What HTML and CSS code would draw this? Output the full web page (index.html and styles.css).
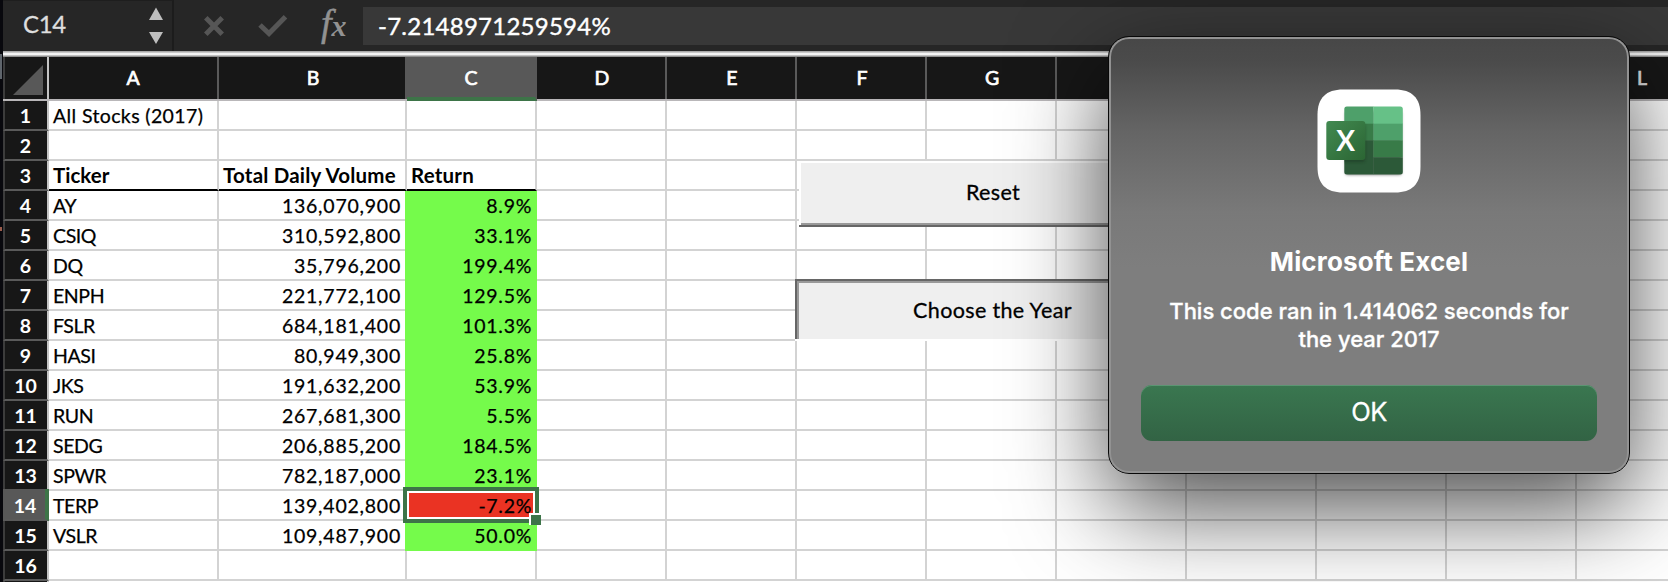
FILE: index.html
```html
<!DOCTYPE html>
<html lang="en">
<head>
<meta charset="utf-8">
<title>All Stocks</title>
<link rel="stylesheet" href="styles.css">
</head>
<body>
<div class="screen">
  <div class="edge"><i class="edge-grey"></i><i class="edge-red"></i></div>
  <main class="app">
    <header class="formula-bar">
      <div class="name-box">
        <span class="cell-name">C14</span>
        <svg class="stepper" width="16" height="38" viewBox="0 0 16 38"><path d="M8 0.500L15 13H1zM8 37L15 25H1z" fill="#bebebe"/></svg>
      </div>
      <div class="tools">
        <svg class="tool-x" width="20" height="20" viewBox="0 0 20 20"><path d="M1.800 1.800L18.200 18.200M18.200 1.800L1.800 18.200" stroke="#565656" stroke-width="5" fill="none"/></svg>
        <svg class="tool-check" width="30" height="22" viewBox="0 0 30 22"><path d="M2 10L11 18.500L27.500 1.800" stroke="#565656" stroke-width="5" fill="none"/></svg>
        <span class="fx"><span class="fx-f">f</span><span class="fx-x">x</span></span>
      </div>
      <div class="formula">-7.2148971259594%</div>
    </header>
    <div class="divider"></div>
    <section class="sheet">
      <div class="row heads">
        <div class="corner"><svg width="30" height="30" viewBox="0 0 30 30"><path d="M30 0V30H0z" fill="#585858"/></svg></div>
        <div class="col a">A</div><div class="col b">B</div><div class="col c on">C</div><div class="col">D</div><div class="col">E</div><div class="col">F</div><div class="col">G</div><div class="col">H</div><div class="col">I</div><div class="col">J</div><div class="col">K</div><div class="col dim">L</div>
      </div>
      <div class="row"><div class="num">1</div><div class="cell a title">All Stocks (2017)</div><div class="cell b"></div><div class="cell c"></div><div class="rest"></div></div>
      <div class="row"><div class="num">2</div><div class="cell a"></div><div class="cell b"></div><div class="cell c"></div><div class="rest"></div></div>
      <div class="row labels"><div class="num">3</div><div class="cell a">Ticker</div><div class="cell b">Total Daily Volume</div><div class="cell c">Return</div><div class="rest"></div></div>
      <div class="row"><div class="num">4</div><div class="cell a">AY</div><div class="cell b">136,070,900</div><div class="cell c up">8.9%</div><div class="rest"></div></div>
      <div class="row"><div class="num">5</div><div class="cell a">CSIQ</div><div class="cell b">310,592,800</div><div class="cell c up">33.1%</div><div class="rest"></div></div>
      <div class="row"><div class="num">6</div><div class="cell a">DQ</div><div class="cell b">35,796,200</div><div class="cell c up">199.4%</div><div class="rest"></div></div>
      <div class="row"><div class="num">7</div><div class="cell a">ENPH</div><div class="cell b">221,772,100</div><div class="cell c up">129.5%</div><div class="rest"></div></div>
      <div class="row"><div class="num">8</div><div class="cell a">FSLR</div><div class="cell b">684,181,400</div><div class="cell c up">101.3%</div><div class="rest"></div></div>
      <div class="row"><div class="num">9</div><div class="cell a">HASI</div><div class="cell b">80,949,300</div><div class="cell c up">25.8%</div><div class="rest"></div></div>
      <div class="row"><div class="num">10</div><div class="cell a">JKS</div><div class="cell b">191,632,200</div><div class="cell c up">53.9%</div><div class="rest"></div></div>
      <div class="row"><div class="num">11</div><div class="cell a">RUN</div><div class="cell b">267,681,300</div><div class="cell c up">5.5%</div><div class="rest"></div></div>
      <div class="row"><div class="num">12</div><div class="cell a">SEDG</div><div class="cell b">206,885,200</div><div class="cell c up">184.5%</div><div class="rest"></div></div>
      <div class="row"><div class="num">13</div><div class="cell a">SPWR</div><div class="cell b">782,187,000</div><div class="cell c up">23.1%</div><div class="rest"></div></div>
      <div class="row"><div class="num on">14</div><div class="cell a">TERP</div><div class="cell b">139,402,800</div><div class="cell c down"><span class="value">-7.2%</span><span class="selection"></span><span class="handle"></span></div><div class="rest"></div></div>
      <div class="row"><div class="num">15</div><div class="cell a">VSLR</div><div class="cell b">109,487,900</div><div class="cell c up">50.0%</div><div class="rest"></div></div>
      <div class="row"><div class="num">16</div><div class="cell a"></div><div class="cell b"></div><div class="cell c"></div><div class="rest"></div></div>
      <div class="row"><div class="num"></div></div>
    </section>
  </main>
  <button class="sheet-button reset">Reset</button>
  <button class="sheet-button choose">Choose the Year</button>
  <div class="dialog">
    <svg class="app-icon" width="104" height="104" viewBox="0 0 104 104">
      <defs>
        <linearGradient id="tile" x1="0" y1="0" x2="1" y2="1"><stop offset="0" stop-color="#428a51"/><stop offset="1" stop-color="#2b6533"/></linearGradient>
        <clipPath id="book"><rect x="27.300" y="17.500" width="58.500" height="68" rx="2.500"/></clipPath>
        <filter id="soft" x="-30%" y="-30%" width="160%" height="160%"><feGaussianBlur stdDeviation="1.600"/></filter>
      </defs>
      <path d="M26 .5H78C95 .5 103.500 9 103.500 26V78C103.500 95 95 103.500 78 103.500H26C9 103.500 .5 95 .5 78V26C.5 9 9 .5 26 .5z" fill="#fff"/>
      <rect x="28.500" y="22" width="56" height="64" rx="2.500" fill="#888" filter="url(#soft)"/>
      <g clip-path="url(#book)">
        <rect x="27" y="17" width="29.500" height="18" fill="#4ea06a"/><rect x="56.300" y="17" width="30" height="18" fill="#66c187"/>
        <rect x="27" y="34.700" width="29.500" height="17" fill="#387b48"/><rect x="56.300" y="34.700" width="30" height="17" fill="#4ea06a"/>
        <rect x="27" y="51.400" width="29.500" height="35" fill="#2c5938"/><rect x="56.300" y="51.400" width="30" height="17" fill="#387b48"/>
        <rect x="56.300" y="68.300" width="30" height="18" fill="#2c5938"/>
        <rect x="20" y="35" width="28" height="38" rx="3" fill="#17301d" opacity=".5" filter="url(#soft)"/>
      </g>
      <rect x="9.300" y="32" width="39" height="39" rx="3" fill="url(#tile)"/>
      <text class="icon-letter" x="28.700" y="62" text-anchor="middle">X</text>
    </svg>
    <h1 class="dialog-title">Microsoft Excel</h1>
    <p class="message">This code ran in 1.414062 seconds for<br>the year 2017</p>
    <button class="ok">OK</button>
  </div>
</div>
</body>
</html>
```
FILE: styles.css
```css
* { box-sizing: border-box; }
body { margin: 0; background: #fff; }
.screen { position: relative; display: flex; width: 1668px; height: 582px; overflow: hidden; font-family: Lato, "Liberation Sans", sans-serif; }
.edge { width: 3px; flex: none; background: #08080d; display: flex; flex-direction: column; }
.edge-grey { width: 2px; height: 25px; margin-top: 54px; background: #5f656c; }
.edge-red { width: 2px; height: 4px; margin-top: 148px; background: #9b5c4c; }
.app { width: 1665px; flex: none; }

.formula-bar { height: 51px; display: flex; background: #262626; color: #fff; }
.name-box { width: 171px; height: 51px; border-right: 2px solid #1c1c1c; border-top: 1px solid #1e1e1e; display: flex; justify-content: space-between; padding: 6px 8px 0 20px; }
.cell-name { font-size: 24px; line-height: 34px; color: #dedede; letter-spacing: -0.3px; -webkit-text-stroke: 0.3px; }
.tools { width: 189px; display: flex; align-items: flex-start; padding-left: 27px; }
.tool-x { margin: 16px 0 0 3px; }
.tool-check { margin: 15px 0 0 34px; }
.fx { margin-left: 33px; color: #929292; font-family: "Liberation Serif", serif; font-style: italic; white-space: nowrap; }
.fx-f { font-size: 38px; line-height: 46px; -webkit-text-stroke: 0.5px; }
.fx-x { font-size: 30px; font-weight: bold; }
.formula { flex: 1; height: 38px; margin-top: 7px; padding-left: 15px; background: #383838; font-size: 24px; line-height: 38px; letter-spacing: 0.25px; -webkit-text-stroke: 0.4px; }
.divider { height: 6px; background: linear-gradient(#a9a9a9 0 1px, #c9c9c9 1px 2px, #f4f4f4 2px 4px, #c0c0c0 4px 5px, #909090 5px); }

.row { display: flex; height: 30px; font-size: 19.5px; line-height: 29px; color: #000; }
.heads { height: 44px; background: #171717; border-bottom: 2px solid #b9b7b9; }
.corner { width: 46px; flex: none; border-right: 2px solid #c4c4c4; border-left: 2px solid #3c3c3c; padding: 8px 0 0 8px; }
.corner svg { display: block; }
.col { width: 130px; flex: none; height: 42px; border-right: 2px solid #5a5a5a; padding-left: 2px; color: #fff; text-align: center; font-size: 19.5px; line-height: 41px; -webkit-text-stroke: 0.7px; }
.col.a, .cell.a { width: 170px; }
.col.b, .cell.b { width: 188px; }
.col.a, .col.c { padding-left: 0; }
.col.b { border-right-color: #585858; }
.col.on { height: 44px; background: #585858; border-right-color: #585858; border-bottom: 4px solid #3d7448; box-shadow: -2px 0 #585858, -2px 0 #3d7448; box-shadow: none; }
.col.dim { color: #e2e2e2; }
.num { width: 46px; flex: none; background: #171717; border-right: 2px solid #c4c4c4; border-left: 2px solid #3c3c3c; border-bottom: 2px solid #5a5a5a; color: #fff; font-weight: bold; text-align: center; padding-right: 1px; }
.num.on { background: #585858; border-left-color: #585858; border-right: 4px solid #3d7448; margin-top: -2px; padding: 2px 0 0; height: 32px; }
.cell { flex: none; border-right: 2px solid #d3d3d3; border-bottom: 2px solid #d3d3d3; white-space: nowrap; text-align: right; -webkit-text-stroke: 0.25px; }
.cell.a { text-align: left; padding-left: 4px; letter-spacing: -0.4px; }
.cell.title { letter-spacing: 0.38px; }
.cell.b { padding-right: 4px; letter-spacing: 0.77px; }
.cell.c { width: 130px; padding-right: 3px; letter-spacing: 0.7px; }
.labels .cell { text-align: left; font-size: 20.5px; font-weight: bold; border-bottom-color: #000; letter-spacing: 0.2px; padding: 0 0 0 4px; -webkit-text-stroke: 0; }
.labels .a { letter-spacing: 0; }
.up { background: #75fb4b; border-color: #75fb4b; box-shadow: -2px 0 #75fb4b; }
.down { position: relative; background: #ea3323; }
.value { position: relative; z-index: 2; }
.selection { position: absolute; left: -4px; top: -4px; width: 136px; height: 36px; border: 4px solid #3d7448; box-shadow: inset 0 0 0 2px #fff; }
.handle { position: absolute; z-index: 3; left: 122px; top: 22px; width: 12px; height: 12px; background: #3d7448; border: solid #fff; border-width: 2px 0 0 2px; }
.rest { flex: 1; border-bottom: 2px solid #d3d3d3; background: repeating-linear-gradient(90deg, #fff 0 128px, #d3d3d3 128px 130px); }

button { font-family: inherit; }
.sheet-button { position: absolute; margin: 0; padding: 0; background: #efefef; font-size: 21.5px; letter-spacing: 0.35px; color: #000; text-align: center; border: 0; -webkit-text-stroke: 0.3px; }
.reset { left: 799px; top: 161px; width: 388px; height: 66px; padding-bottom: 5px; box-shadow: inset 0 -2px #666, inset 2px 2px #fff, inset 0 -4px #999; }
.choose { left: 795px; top: 279px; width: 395px; height: 62px; padding-top: 2px; border-bottom: 2px solid #fff; box-shadow: inset 2px 2px #666, inset 4px 4px #999; }

.dialog { position: absolute; left: 1108px; top: 36px; width: 522px; height: 438px; border: 1px solid #080808; border-radius: 21px; padding: 52px 32px 0; display: flex; flex-direction: column; align-items: center; background: linear-gradient(#474747, #4b4b4b 25px, #656565 95px, #797979 175px, #7e7e7e 230px); box-shadow: inset 0 0 0 2px #929292, 0 34px 96px rgba(0,0,0,.7); color: #fff; font-family: Inter, "Liberation Sans", sans-serif; }
.app-icon { display: block; flex: none; }
.icon-letter { font-family: Lato, sans-serif; font-weight: bold; font-size: 28px; fill: #fff; }
.dialog-title { margin: 53px 0 0; font-size: 26px; line-height: 32px; font-weight: 700; letter-spacing: 0.15px; white-space: nowrap; }
.message { margin: 19px 0 0; font-size: 22px; line-height: 28px; font-weight: 500; text-align: center; white-space: nowrap; -webkit-text-stroke: 0.3px; }
.ok { width: 456px; height: 56px; margin: 32px 0 0; padding: 0 0 3px; border: 0; border-radius: 11px; background: linear-gradient(#3a7750, #326344); box-shadow: inset 0 1px #5c9573; color: #fff; font-size: 25.5px; letter-spacing: -0.5px; -webkit-text-stroke: 0.3px; }
```
